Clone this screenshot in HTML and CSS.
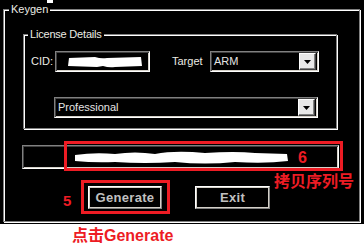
FILE: index.html
```html
<!DOCTYPE html>
<html>
<head>
<meta charset="utf-8">
<link rel="stylesheet" href="styles.css">
</head>
<body>
<div class="screen">
  <div class="dot"></div>
  <div class="group outer">
    <div class="legend">Keygen</div>
    <div class="group inner">
      <div class="legend legend-tight">License Details</div>
      <div class="row1">
        <span class="lbl cid-lbl">CID:</span>
        <div class="field cid">
          <svg class="blob" width="75" height="12" viewBox="0 0 75 12"><path d="M2,2 L28,1 Q34,3 40,2 L74,1 L75,10 L48,11 Q42,12 36,10 L30,11 L1,10 Z" fill="#fff"/></svg>
        </div>
        <span class="lbl target-lbl">Target</span>
        <div class="combo arm"><span class="combo-text">ARM</span><div class="drop"><svg width="7" height="4" viewBox="0 0 7 4"><polygon points="0,0 7,0 3.5,4" fill="#000"/></svg></div></div>
      </div>
      <div class="combo prof"><span class="combo-text">Professional</span><div class="drop"><svg width="7" height="4" viewBox="0 0 7 4"><polygon points="0,0 7,0 3.5,4" fill="#000"/></svg></div></div>
    </div>
    <div class="field serial">
      <svg class="blob serial-blob" width="215" height="15" viewBox="0 0 215 15"><path d="M0,5 Q20,2 40,4 Q60,1 80,4 Q100,0 130,3 Q160,1 180,3 L212,4 L213,11 Q190,14 160,12 Q130,15 100,12 Q70,14 40,12 Q20,13 0,11 Z" fill="#fff"/></svg>
    </div>
    <div class="buttons">
      <div class="btn gen">Generate</div>
      <div class="btn exit">Exit</div>
    </div>
  </div>
  <div class="mark box-serial"></div>
  <div class="mark box-gen"></div>
  <div class="note num5">5</div>
  <div class="note num6">6</div>
  <div class="note copy">拷贝序列号</div>
</div>
<div class="caption">点击Generate</div>
</body>
</html>
```
FILE: styles.css
```css
html, body {
  margin: 0;
  padding: 0;
  background: #fff;
}
body {
  width: 364px;
  height: 243px;
  overflow: hidden;
  font-family: "Liberation Sans", Arial, sans-serif;
}
.screen {
  position: relative;
  height: 224px;
  box-sizing: border-box;
  padding: 9px 0 0 3px;
  background: #000;
}
.dot {
  position: absolute;
  left: 47px;
  top: 0;
  width: 6px;
  height: 3px;
  background: #fff;
}
.group {
  box-sizing: border-box;
  border: 1px solid #808080;
  box-shadow: 1px 1px 0 #fff, inset 1px 1px 0 #fff;
}
.outer {
  width: 357px;
  height: 213px;
}
.inner {
  margin: 18px 0 0 19px;
  width: 314px;
  height: 95px;
}
.legend {
  width: fit-content;
  margin: -7px 0 0 5px;
  padding: 0 2px;
  background: #000;
  color: #ececE4;
  font-size: 11px;
  line-height: 13px;
}
.inner .legend {
  margin-left: 4px;
}
.legend-tight {
  letter-spacing: -0.2px;
}
.row1 {
  display: flex;
  align-items: center;
  height: 21px;
  margin-top: 10px;
  padding-left: 7px;
}
.lbl {
  color: #ececE4;
  font-size: 11px;
  line-height: 13px;
}
.cid-lbl {
  width: 24px;
}
.target-lbl {
  width: 38px;
  margin-left: 22px;
}
.field, .combo {
  box-sizing: border-box;
  border: 1px solid;
  border-color: #808080 #fff #fff #808080;
  box-shadow: inset 1px 1px 0 #404040, inset -1px -1px 0 #d4d0c8;
  background: #000;
}
.field {
  display: flex;
  align-items: center;
}
.cid {
  width: 95px;
  height: 21px;
  padding-left: 11px;
}
.blob {
  display: block;
}
.combo {
  display: flex;
  align-items: center;
  justify-content: space-between;
  height: 21px;
  padding: 2px 2px 2px 3px;
}
.combo-text {
  color: #e4e4e4;
  font-size: 11px;
  line-height: 13px;
}
.arm {
  width: 109px;
}
.prof {
  width: 264px;
  margin: 25px 0 0 30px;
}
.drop {
  box-sizing: border-box;
  width: 17px;
  height: 17px;
  display: flex;
  align-items: center;
  justify-content: center;
  background: #e8e8e8;
  border: 1px solid;
  border-color: #fff #404040 #404040 #fff;
  box-shadow: inset -1px -1px 0 #808080;
}
.drop svg {
  display: block;
}
.serial {
  width: 317px;
  height: 24px;
  margin: 16px 0 0 18px;
  padding-left: 52px;
}
.buttons {
  display: flex;
  margin: 17px 0 0 84px;
}
.btn {
  box-sizing: border-box;
  height: 23px;
  display: flex;
  align-items: center;
  justify-content: center;
  border: 1px solid;
  border-color: #fff #808080 #808080 #fff;
  box-shadow: inset -1px -1px 0 #d4d0c8, inset 1px 1px 0 #d4d0c8;
  background: #000;
  color: #c0c0c0;
  font-weight: bold;
  font-size: 13px;
  letter-spacing: 0.3px;
}
.gen {
  width: 74px;
}
.exit {
  width: 75px;
  margin-left: 33px;
}
.mark {
  position: absolute;
  box-sizing: border-box;
  border: 3px solid #ed1c24;
}
.box-serial {
  left: 64px;
  top: 141px;
  width: 279px;
  height: 30px;
}
.box-gen {
  left: 81px;
  top: 180px;
  width: 89px;
  height: 34px;
}
.note {
  position: absolute;
  color: #ed1c24;
  font-weight: bold;
  font-family: "Liberation Sans", "Noto Sans CJK SC", sans-serif;
}
.num5 {
  left: 63px;
  top: 193px;
  font-size: 15px;
  line-height: 15px;
}
.num6 {
  left: 298px;
  top: 150px;
  font-size: 16px;
  line-height: 16px;
}
.copy {
  left: 274px;
  top: 172px;
  font-family: "Noto Sans CJK SC", sans-serif;
  font-size: 16px;
  line-height: 16px;
}
.caption {
  padding: 2px 0 0 72px;
  color: #ed1c24;
  font-weight: bold;
  font-family: "Liberation Sans", "Noto Sans CJK SC", sans-serif;
  font-size: 16px;
  line-height: 19px;
  white-space: nowrap;
}
```
